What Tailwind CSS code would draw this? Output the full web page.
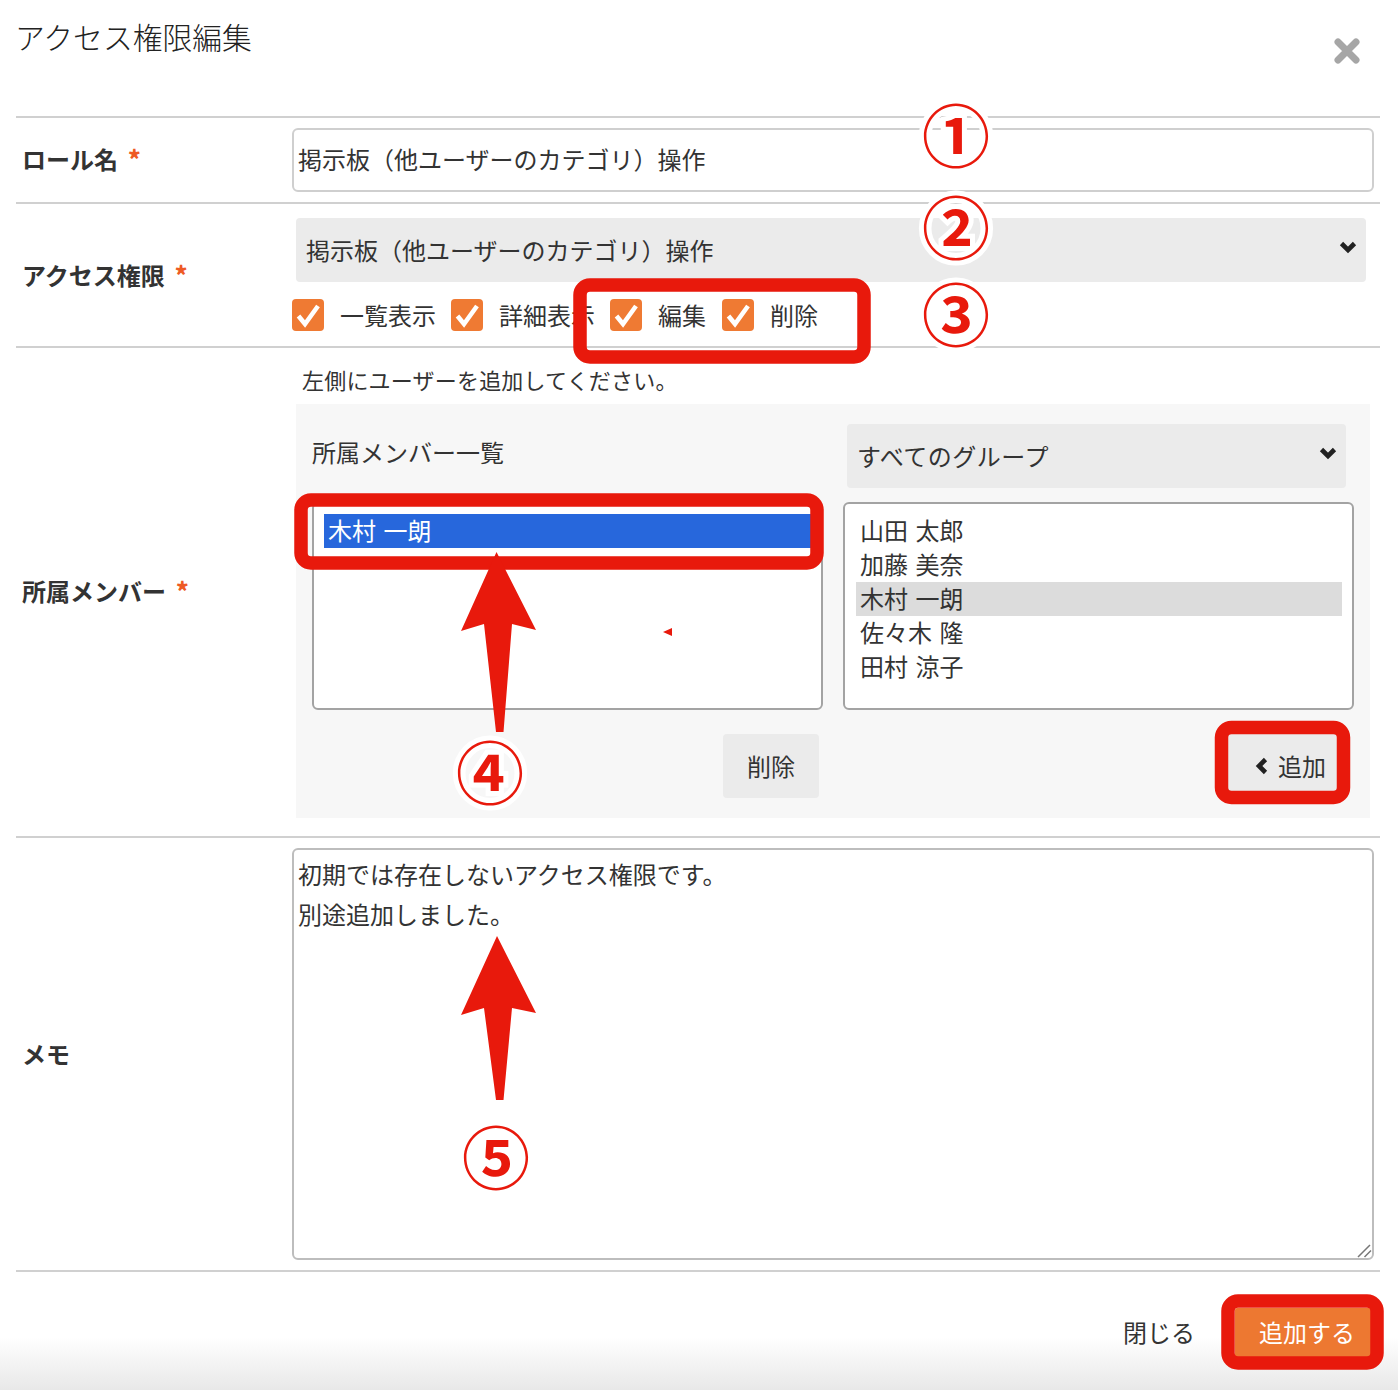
<!DOCTYPE html>
<html lang="ja">
<head>
<meta charset="utf-8">
<title>アクセス権限編集</title>
<script src="https://cdn.jsdelivr.net/npm/@tailwindcss/browser@4"></script>
</head>
<body class="bg-white">
<div class="relative w-[1398px] h-[1390px] overflow-hidden bg-white font-['Noto_Sans_CJK_JP',sans-serif] text-[24px] text-[#333]">
  <!-- header -->
  <div class="ml-4 w-[1364px] h-[116px] flex justify-between">
    <h1 class="text-[29.8px] leading-[40px] mt-[16px] -ml-[1px] font-light text-[#222]">アクセス権限編集</h1>
    <svg class="mt-[38px] mr-[20px] w-[26px] h-[26px]" viewBox="0 0 26 26"><path d="M4 4 L22 22 M22 4 L4 22" stroke="#a6a6a6" stroke-width="7" stroke-linecap="round"/></svg>
  </div>

  <!-- role name -->
  <div class="ml-4 w-[1364px] h-[88px] border-y-2 border-[#d0d0d0] flex items-center">
    <div class="w-[276px] pl-[6px] -mt-[3px] font-bold leading-[34px]">ロール名<span class="ml-[10px] text-[#ee5a24] font-black text-[24px] align-[1px]">*</span></div>
    <input class="w-[1082px] h-[64px] border-2 border-[#cfcfcf] rounded-[6px] pl-[4px] pb-[3px] bg-white outline-none" value="掲示板（他ユーザーのカテゴリ）操作">
  </div>

  <!-- access -->
  <div class="ml-4 w-[1364px] h-[146px] -mt-[2px] border-b-2 border-[#d0d0d0] border-t-2 flex">
    <div class="w-[276px] pl-[6px] pt-[53px] font-bold leading-[34px]">アクセス権限<span class="ml-[10px] text-[#ee5a24] font-black text-[24px] align-[1px]">*</span></div>
    <div class="pt-[14px]">
      <div class="ml-[4px] w-[1070px] h-[64px] bg-[#ebebeb] rounded-[4px] pl-[10px] pr-[9px] flex items-center justify-between">
        <span class="-mt-[1px]">掲示板（他ユーザーのカテゴリ）操作</span>
        <svg class="w-[18px] h-[14px] -mt-[6px]" viewBox="0 0 18 14"><path d="M2.5 3.5 L9 10 L15.5 3.5" fill="none" stroke="#222" stroke-width="4.6"/></svg>
      </div>
      <div class="mt-[17px] flex items-center h-[32px]">
        <span class="w-[32px] h-[32px] rounded-[4px] bg-[#ef7a33] flex items-center justify-center"><svg class="w-[26px] h-[26px]" viewBox="0 0 26 26"><path d="M3.500 14 L10 22 L23 4" fill="none" stroke="#fff" stroke-width="4.6"/></svg></span>
        <span class="ml-[16px] w-[111px]">一覧表示</span>
        <span class="w-[32px] h-[32px] rounded-[4px] bg-[#ef7a33] flex items-center justify-center"><svg class="w-[26px] h-[26px]" viewBox="0 0 26 26"><path d="M3.500 14 L10 22 L23 4" fill="none" stroke="#fff" stroke-width="4.6"/></svg></span>
        <span class="ml-[16px] w-[111px]">詳細表示</span>
        <span class="w-[32px] h-[32px] rounded-[4px] bg-[#ef7a33] flex items-center justify-center"><svg class="w-[26px] h-[26px]" viewBox="0 0 26 26"><path d="M3.500 14 L10 22 L23 4" fill="none" stroke="#fff" stroke-width="4.6"/></svg></span>
        <span class="ml-[16px] w-[64px]">編集</span>
        <span class="w-[32px] h-[32px] rounded-[4px] bg-[#ef7a33] flex items-center justify-center"><svg class="w-[26px] h-[26px]" viewBox="0 0 26 26"><path d="M3.500 14 L10 22 L23 4" fill="none" stroke="#fff" stroke-width="4.6"/></svg></span>
        <span class="ml-[16px]">削除</span>
      </div>
    </div>
  </div>

  <!-- members -->
  <div class="ml-4 w-[1364px] h-[490px] border-b-2 border-[#d0d0d0] flex">
    <div class="w-[276px] pl-[6px] pt-[225px] font-bold leading-[34px]">所属メンバー<span class="ml-[10px] text-[#ee5a24] font-black text-[24px] align-[1px]">*</span></div>
    <div class="pl-[4px]">
      <p class="pl-[6px] h-[56px] pt-[15px] text-[22px] leading-[32px] tracking-[0.2px]">左側にユーザーを追加してください。</p>
      <div class="w-[1074px] h-[414px] bg-[#f7f7f7] pt-[20px] pl-[16px]">
        <div class="flex h-[64px]">
          <div class="w-[535px] pt-[13px] leading-[30px]">所属メンバー一覧</div>
          <div class="w-[499px] h-[64px] bg-[#ebebeb] rounded-[4px] pl-[10px] pr-[9px] flex items-center justify-between">
            <span class="tracking-[0.5px]">すべてのグループ</span>
            <svg class="w-[18px] h-[14px] -mt-[6px]" viewBox="0 0 18 14"><path d="M2.5 3.5 L9 10 L15.5 3.5" fill="none" stroke="#222" stroke-width="4.6"/></svg>
          </div>
        </div>
        <div class="mt-[14px] flex gap-[20px]">
          <div class="w-[511px] h-[208px] border-2 border-[#a3a3a3] rounded-[6px] bg-white pt-[10px] px-[10px] leading-[32px] [word-spacing:2px]">
            <div class="h-[34px] bg-[#2767dc] text-white pl-[4px]">木村 一朗</div>
          </div>
          <div class="w-[511px] h-[208px] border-2 border-[#a3a3a3] rounded-[6px] bg-white pt-[10px] pl-[11px] pr-[10px] leading-[32px] [word-spacing:2px]">
            <div class="h-[34px] pl-[4px]">山田 太郎</div>
            <div class="h-[34px] pl-[4px]">加藤 美奈</div>
            <div class="h-[34px] pl-[4px] bg-[#dcdcdc]">木村 一朗</div>
            <div class="h-[34px] pl-[4px]">佐々木 隆</div>
            <div class="h-[34px] pl-[4px]">田村 涼子</div>
          </div>
        </div>
        <div class="mt-[24px] flex">
          <div class="ml-[411px] w-[96px] h-[64px] rounded-[4px] bg-[#ebebeb] flex items-center justify-center">削除</div>
          <div class="ml-[409px] w-[110px] h-[64px] rounded-[4px] bg-[#ebebeb] flex items-center justify-end gap-[9px] pr-[12px]">
            <svg class="w-[14px] h-[18px]" viewBox="0 0 14 18"><path d="M10.5 2.5 L4 9 L10.5 15.5" fill="none" stroke="#222" stroke-width="4.6"/></svg>
            <span>追加</span>
          </div>
        </div>
      </div>
    </div>
  </div>

  <!-- memo -->
  <div class="ml-4 w-[1364px] h-[434px] border-b-2 border-[#d0d0d0] flex items-center">
    <div class="w-[276px] pl-[6px] font-bold leading-[34px]">メモ</div>
    <div class="relative w-[1082px] h-[412px]">
      <textarea class="block w-full h-full resize-none border-2 border-[#bdbdbd] rounded-[6px] pl-[4px] pt-[4px] leading-[40px] bg-white outline-none">初期では存在しないアクセス権限です。
別途追加しました。</textarea>
      <svg class="absolute right-[2px] bottom-[2px] w-[16px] h-[16px]" viewBox="0 0 16 16"><path d="M2 15 L14 3 M8.500 15 L15 8.500" fill="none" stroke="#777" stroke-width="1.5"/></svg>
    </div>
  </div>

  <!-- footer -->
  <div class="h-[118px] bg-gradient-to-b from-white from-[55%] to-[#e8e8e8] flex items-start justify-end pr-[27px] pt-[36px]">
    <span class="mr-[40px] h-[50px] leading-[48px]">閉じる</span>
    <span class="w-[136px] h-[50px] leading-[48px] pl-[8px] rounded-[2px] bg-[#ed7831] text-white text-center">追加する</span>
  </div>

  <!-- annotations layered over the screenshot -->
  <svg class="absolute inset-0 pointer-events-none" width="1398" height="1390" viewBox="0 0 1398 1390">
    <g fill="none" stroke="#e8190c" stroke-width="13.5">
      <rect x="580" y="285" width="284" height="72" rx="10"/>
      <rect x="301" y="500" width="516" height="63" rx="10"/>
      <rect x="1221.500" y="727.500" width="122" height="70" rx="10"/>
      <rect x="1228" y="1301" width="149" height="62" rx="10"/>
    </g>
    <g fill="#e8190c">
      <path d="M496.500 552 L536 630 L512 624 L503.500 732 L496 732 L484 624 L461 631 Z"/>
      <path d="M497 936 L536 1013 L512 1008 L503.500 1100 L496 1100 L484 1008 L461 1015 Z"/>
      <path d="M663 632 L672 628 L672 636 Z"/>
    </g>
    <g class="font-['Noto_Sans_CJK_JP',sans-serif] font-bold" fill="#e8190c" stroke="#fff" stroke-width="10" text-anchor="middle" font-size="68">
      <text class="[paint-order:stroke]" x="956" y="162">①</text>
      <text class="[paint-order:stroke]" x="956" y="254">②</text>
      <text class="[paint-order:stroke]" x="956" y="341">③</text>
      <text class="[paint-order:stroke]" x="490" y="799">④</text>
      <text class="[paint-order:stroke]" x="496" y="1184">⑤</text>
    </g>
  </svg>
</div>
</body>
</html>
